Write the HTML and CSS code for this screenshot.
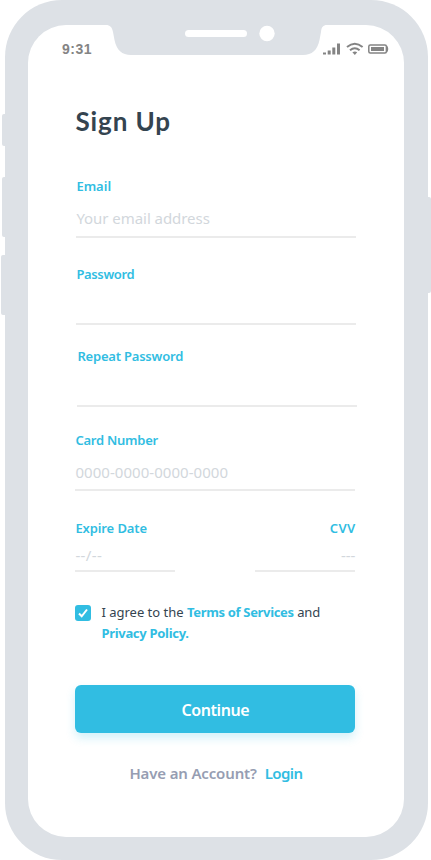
FILE: index.html
```html
<!DOCTYPE html>
<html lang="en">
<head>
<meta charset="utf-8">
<title>Sign Up</title>
<link rel="stylesheet" href="styles.css">
</head>
<body>
<div class="phone">
  <span class="side-key key-mute"></span>
  <span class="side-key key-up"></span>
  <span class="side-key key-down"></span>
  <span class="side-key key-power"></span>
  <main class="screen">
    <svg class="notch" width="218" height="32" viewBox="0 0 218 32">
      <path fill="#dde1e6" d="M-2 0V1C2 1 4 3 5 8L6.500 16C8.500 26 14 31 23 31H195C204 31 209.500 26 211.500 16L213 8C213.500 3 215 1 219 1V0Z"/>
      <rect x="77" y="6" width="62" height="7" rx="3.500" fill="#fff"/>
      <circle cx="159" cy="9.500" r="7.700" fill="#fff"/>
    </svg>
    <header class="status">
      <span class="time">9:31</span>
      <svg class="status-icons" width="68" height="14" viewBox="0 0 68 14">
        <g fill="#848484">
          <path d="M1 10.500h3v2H1zM5.700 8.500h3v4h-3zM10.300 5.500h3v7h-3zM15 1.500h3v11h-3z"/>
          <path d="M30.400 10.300Q33 8.600 35.200 10.300L32.800 12.900Z"/>
        </g>
        <g fill="none" stroke="#848484">
          <path stroke-width="2" d="M25 5Q32.800 -1.500 40.600 5M28 8.200Q32.800 4.200 37.600 8.200"/>
          <rect x="46.800" y="3" width="17.600" height="8" rx="1.500" stroke-width="1.500"/>
        </g>
        <path fill="#848484" d="M49 5h13v4H49zM65 3.500Q67.500 7 65 10.500Z"/>
      </svg>
    </header>
    <form class="form">
      <h1>Sign Up</h1>
      <label class="field email"><span class="label t-email">Email</span><span class="value t-address">Your email address</span></label>
      <label class="field password"><span class="label t-password">Password</span><span class="value"></span></label>
      <label class="field repeat"><span class="label t-repeat">Repeat Password</span><span class="value"></span></label>
      <label class="field card"><span class="label t-card">Card Number</span><span class="value t-digits">0000-0000-0000-0000</span></label>
      <div class="row">
        <label class="field short"><span class="label t-expire">Expire Date</span><span class="value t-date">--/--</span></label>
        <label class="field short right"><span class="label t-cvv">CVV</span><span class="value t-code">---</span></label>
      </div>
      <div class="agree">
        <svg class="check" width="16" height="16" viewBox="0 0 16 16">
          <rect width="16" height="16" rx="3" fill="#31bde2"/>
          <path d="M4 8.500L6.700 11.300L12 4.500" fill="none" stroke="#fff" stroke-width="2"/>
        </svg>
        <p><span class="t-agree">I agree to the</span> <b class="t-terms">Terms of Services</b> <span class="t-and">and</span><br><b class="t-privacy">Privacy Policy.</b></p>
      </div>
      <button type="button"><span class="t-continue">Continue</span></button>
      <p class="account"><span class="t-have">Have an Account?</span><a class="t-login">Login</a></p>
    </form>
  </main>
</div>
</body>
</html>
```
FILE: styles.css
```css
* { box-sizing: border-box; }
body { margin: 0; background: #fff; font-family: "Noto Sans", "Open Sans", sans-serif; overflow: hidden; }
.phone { position: relative; width: 423px; height: 860px; margin-left: 5px; padding: 25px 24.500px 23px 23px; background: #dde1e6; border-radius: 57px; }
.screen { position: relative; height: 812px; background: #fff; border-radius: 38px; }
.side-key { position: absolute; background: #dde1e6; width: 5px; border-radius: 2px 0 0 2px; }
.key-mute { left: -3.500px; top: 114px; height: 32px; }
.key-up { left: -3.500px; top: 177px; height: 60px; }
.key-down { left: -4.500px; top: 255px; height: 60px; }
.key-power { right: -3px; top: 197px; height: 96px; border-radius: 0 2px 2px 0; }
.notch { position: absolute; left: 80px; top: -1px; overflow: visible; }
.status { display: flex; justify-content: space-between; height: 48px; padding: 16px 13.500px 0 34px; }
.status-icons { margin-top: 1px; }
.time { font: bold 14px/16px "Liberation Sans", sans-serif; color: #848484; letter-spacing: .5px; }
.form { padding: 0 48px 0 47.400px; }
h1 { margin: 0; padding-top: 30px; height: 104px; font: 700 26px/36px Lato, sans-serif; letter-spacing: .9px; color: #344450; }
.field { display: block; border-bottom: 2px solid #ebebeb; height: 60px; width: 280px; }
.label { display: block; font-size: 13px; line-height: 18px; font-weight: 600; color: #31bde2; white-space: nowrap; }
.value { display: block; font-size: 15px; line-height: 20px; margin-top: 13px; color: #d2d7dc; white-space: nowrap; }
.label, .value, .account span, .account a { width: max-content; }
.email { margin-left: 1px; height: 61px; }
.password { margin: 27px 0 0 1px; }
.repeat { margin: 22px 0 0 2px; }
.card { margin-top: 24px; }
.row { display: flex; justify-content: space-between; width: 280px; margin-top: 28px; }
.short { width: 100px; height: 53px; }
.short .value { margin-top: 8px; }
.right { display: flex; flex-direction: column; align-items: flex-end; }
.agree { display: flex; gap: 10px; margin-top: 30px; font-size: 13px; line-height: 21px; color: #344450; }
.agree p { margin: 0; white-space: nowrap; }
.agree b { color: #31bde2; font-weight: 700; }
.check { flex: none; margin-top: 3px; }
button { display: block; width: 280px; height: 48px; margin-top: 41px; padding: 2px 0 0; border: 0; border-radius: 6px; background: #31bde2; box-shadow: 0 5px 10px #31bde238; color: #fff; font: 600 16px/24px "Noto Sans", sans-serif; }
.account { display: flex; gap: 8px; margin: 29px 0 0 54px; font-size: 15px; line-height: 22px; font-weight: 600; color: #969db2; white-space: nowrap; }
.account a { color: #31bde2; }

/* Tracking per text run */
.t-password { letter-spacing: -.35px; }
.t-repeat { letter-spacing: -.2px; }
.t-card { letter-spacing: -.25px; }
.t-expire { letter-spacing: -.1px; }
.t-cvv { letter-spacing: .3px; }
.t-address { letter-spacing: -.05px; }
.t-digits { letter-spacing: .05px; }
.t-date { letter-spacing: .4px; }
.t-terms { letter-spacing: -.33px; }
.t-and { letter-spacing: -.1px; }
.t-privacy { letter-spacing: -.3px; }
.t-continue { letter-spacing: -.4px; }
.t-have { letter-spacing: -.15px; }
.t-login { letter-spacing: -.6px; }
```
